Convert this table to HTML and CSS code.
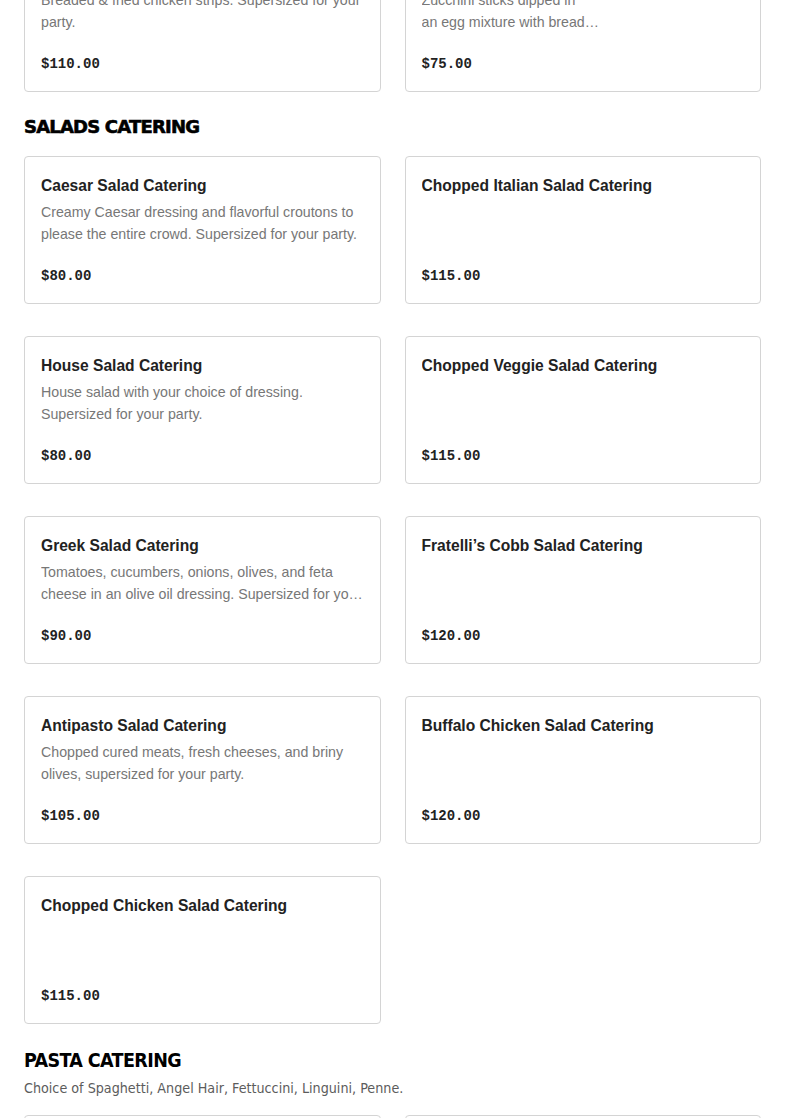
FILE: index.html
```html
<!DOCTYPE html>
<html lang="en">
<head>
<meta charset="utf-8">
<title>Catering Menu</title>
<link rel="stylesheet" href="styles.css">
</head>
<body>
<main class="menu">
  <section class="section section-prev">
    <div class="grid">
      <article class="card">
        <h3 class="card-title">Chicken Tenders Catering</h3>
        <p class="card-desc">Breaded &amp; fried chicken strips. Supersized for your party.</p>
        <p class="card-price">$110.00</p>
      </article>
      <article class="card">
        <h3 class="card-title">Fried Zucchini Catering</h3>
        <p class="card-desc">Zucchini sticks dipped in<br>an egg mixture with bread…</p>
        <p class="card-price">$75.00</p>
      </article>
    </div>
  </section>

  <section class="section">
    <h2 class="section-title wide">SALADS CATERING</h2>
    <div class="grid">
      <article class="card">
        <h3 class="card-title">Caesar Salad Catering</h3>
        <p class="card-desc">Creamy Caesar dressing and flavorful croutons to please the entire crowd. Supersized for your party.</p>
        <p class="card-price">$80.00</p>
      </article>
      <article class="card">
        <h3 class="card-title">Chopped Italian Salad Catering</h3>
        <p class="card-desc"></p>
        <p class="card-price">$115.00</p>
      </article>
      <article class="card">
        <h3 class="card-title">House Salad Catering</h3>
        <p class="card-desc">House salad with your choice of dressing. Supersized for your party.</p>
        <p class="card-price">$80.00</p>
      </article>
      <article class="card">
        <h3 class="card-title">Chopped Veggie Salad Catering</h3>
        <p class="card-desc"></p>
        <p class="card-price">$115.00</p>
      </article>
      <article class="card">
        <h3 class="card-title">Greek Salad Catering</h3>
        <p class="card-desc clamp">Tomatoes, cucumbers, onions, olives, and feta cheese in an olive oil dressing. Supersized for your party.</p>
        <p class="card-price">$90.00</p>
      </article>
      <article class="card">
        <h3 class="card-title">Fratelli’s Cobb Salad Catering</h3>
        <p class="card-desc"></p>
        <p class="card-price">$120.00</p>
      </article>
      <article class="card">
        <h3 class="card-title">Antipasto Salad Catering</h3>
        <p class="card-desc">Chopped cured meats, fresh cheeses, and briny olives, supersized for your party.</p>
        <p class="card-price">$105.00</p>
      </article>
      <article class="card">
        <h3 class="card-title">Buffalo Chicken Salad Catering</h3>
        <p class="card-desc"></p>
        <p class="card-price">$120.00</p>
      </article>
      <article class="card">
        <h3 class="card-title">Chopped Chicken Salad Catering</h3>
        <p class="card-desc"></p>
        <p class="card-price">$115.00</p>
      </article>
    </div>
  </section>

  <section class="section section-pasta">
    <h2 class="section-title narrow">PASTA CATERING</h2>
    <p class="section-sub">Choice of Spaghetti, Angel Hair, Fettuccini, Linguini, Penne.</p>
    <div class="grid">
      <article class="card">
        <h3 class="card-title">Spaghetti Catering</h3>
        <p class="card-desc"></p>
        <p class="card-price">$80.00</p>
      </article>
      <article class="card">
        <h3 class="card-title">Baked Ziti Catering</h3>
        <p class="card-desc"></p>
        <p class="card-price">$90.00</p>
      </article>
    </div>
  </section>
</main>
</body>
</html>
```
FILE: styles.css
```css
* { box-sizing: border-box; }
html, body { margin: 0; padding: 0; background: #fff; }
body {
  font-family: "Liberation Sans", Arial, sans-serif;
  color: #222;
  overflow: hidden;
}
.menu {
  padding: 0 24px;
  margin-top: -56px;
}
.section { margin-top: 21px; }
.section-prev { margin-top: 0; }
.section-pasta { margin-top: 23px; }
.section-title {
  margin: 0 0 15px;
  line-height: 28px;
  color: #000;
}
.section-title.wide {
  font-family: "DejaVu Sans", sans-serif;
  font-weight: 900;
  font-size: 18px;
  letter-spacing: -0.8px;
  -webkit-text-stroke: 0.6px #000;
}
.section-title.narrow {
  font-family: "DejaVu Sans Condensed", "DejaVu Sans", sans-serif;
  font-stretch: condensed;
  font-weight: 700;
  font-size: 19.5px;
  letter-spacing: -0.6px;
  margin-bottom: 0;
}
.section-sub {
  font-family: "Liberation Sans Narrow", "DejaVu Sans Condensed", sans-serif;
  font-stretch: condensed;
  font-size: 14.2px;
  line-height: 22px;
  color: #5c5c5c;
  margin: 2px 0 16px;
}
.grid {
  display: grid;
  grid-template-columns: 1fr 1fr;
  column-gap: 24px;
  row-gap: 32px;
}
.card {
  border: 1px solid #d4d4d4;
  border-radius: 4px;
  padding: 17px 16px 15px;
  height: 148px;
  display: flex;
  flex-direction: column;
}
.card-title {
  margin: 0;
  font-size: 15.6px;
  font-weight: 700;
  line-height: 24px;
  color: #222;
  white-space: nowrap;
  overflow: hidden;
  text-overflow: ellipsis;
}
.card-desc {
  margin: 3px 0 0;
  font-size: 14.2px;
  line-height: 22px;
  color: #777;
  height: 44px;
  overflow: hidden;
  display: -webkit-box;
  -webkit-line-clamp: 2;
  -webkit-box-orient: vertical;
}
.card-price {
  margin: 20px 0 0;
  font-family: "Liberation Mono", "Courier New", monospace;
  font-weight: 700;
  font-size: 14px;
  line-height: 22px;
  color: #222;
}
```
